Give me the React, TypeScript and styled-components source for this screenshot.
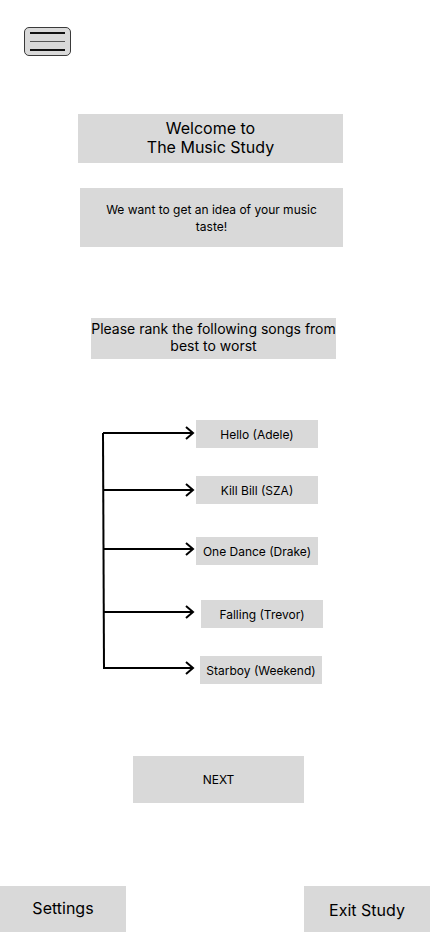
import styled, { createGlobalStyle } from "styled-components";

const songs = [
    { title: "Hello (Adele)", indent: 0, gap: 0 },
    { title: "Kill Bill (SZA)", indent: 0, gap: 28 },
    { title: "One Dance (Drake)", indent: 0, gap: 33 },
    { title: "Falling (Trevor)", indent: 5, gap: 35 },
    { title: "Starboy (Weekend)", indent: 4, gap: 28 },
];

// arrow rows, in svg coords (svg sits at x=100, y=420)
const arrowRows = [13, 70, 129, 192, 248];

export default function App() {
    return (
        <>
            <GlobalStyle />
            <Page>
                <MenuButton aria-label="menu">
                    <MenuLine />
                    <MenuLine $muted />
                    <MenuLine />
                </MenuButton>

                <TitleBox>
                    Welcome to
                    <br />
                    The Music Study
                </TitleBox>

                <IntroBox>
                    <IntroText>We want to get an idea of your music taste!</IntroText>
                </IntroBox>

                <PromptBox>
                    Please rank the following songs from
                    <br />
                    best to worst
                </PromptBox>

                <RankArea>
                    <Bracket width="96" height="263" viewBox="0 0 96 263">
                        <path
                            d="M3 13 L4 248"
                            stroke="#000"
                            strokeWidth="2"
                            fill="none"
                        />
                        {arrowRows.map((y, i) => (
                            <g key={i} stroke="#000" strokeWidth="2" fill="none">
                                <line x1="3" y1={y} x2="93" y2={y} />
                                <polyline
                                    points={`86,${y - 6} 93,${y} 86,${y + 6}`}
                                    strokeLinejoin="miter"
                                />
                            </g>
                        ))}
                    </Bracket>
                    <SongColumn>
                        {songs.map((s) => (
                            <SongBox key={s.title} $indent={s.indent} $gap={s.gap}>
                                {s.title}
                            </SongBox>
                        ))}
                    </SongColumn>
                </RankArea>

                <NextButton>NEXT</NextButton>

                <BottomBar>
                    <BottomButton>Settings</BottomButton>
                    <BottomButton $drop>Exit Study</BottomButton>
                </BottomBar>
            </Page>
        </>
    );
}

// ! Styles

const GlobalStyle = createGlobalStyle`
    html, body {
        margin: 0;
        padding: 0;
        background: #ffffff;
    }
    body {
        font-family: Inter, "Noto Sans", sans-serif;
        color: #000;
    }
    * {
        box-sizing: border-box;
    }
`;

const Page = styled.div`
    width: 430px;
    height: 932px;
    display: flex;
    flex-direction: column;
    align-items: flex-start;
    overflow: hidden;
`;

const MenuButton = styled.div`
    margin: 27px 0 0 24px;
    width: 47px;
    height: 29px;
    border: 1.5px solid #3a3a3a;
    border-radius: 5px;
    background: #d9d9d9;
    display: flex;
    flex-direction: column;
    justify-content: center;
    gap: 7px;
    padding: 0 5px;
`;

const MenuLine = styled.span<{ $muted?: boolean }>`
    display: block;
    height: 1.5px;
    background: ${(p) => (p.$muted ? "#555" : "#111")};
`;

const GreyBox = styled.div`
    background: #d9d9d9;
    display: flex;
    align-items: center;
    justify-content: center;
    text-align: center;
`;

const TitleBox = styled(GreyBox)`
    margin: 58px 0 0 78px;
    width: 265px;
    height: 49px;
    padding-bottom: 2px;
    font-size: 16px;
    line-height: 19px;
`;

const IntroBox = styled(GreyBox)`
    margin: 25px 0 0 80px;
    width: 263px;
    height: 59px;
`;

const IntroText = styled.p`
    margin: 0;
    width: 225px;
    font-size: 12px;
    line-height: 17px;
`;

const PromptBox = styled(GreyBox)`
    margin: 71px 0 0 91px;
    width: 245px;
    height: 41px;
    padding-bottom: 4px;
    font-size: 14px;
    line-height: 17px;
    white-space: nowrap;
`;

const RankArea = styled.div`
    margin: 61px 0 0 100px;
    display: flex;
    align-items: flex-start;
`;

const Bracket = styled.svg`
    display: block;
    flex-shrink: 0;
`;

const SongColumn = styled.div`
    display: flex;
    flex-direction: column;
`;

const SongBox = styled(GreyBox)<{ $indent: number; $gap: number }>`
    margin-top: ${(p) => p.$gap}px;
    margin-left: ${(p) => p.$indent}px;
    width: 122px;
    height: 28px;
    font-size: 12px;
`;

const NextButton = styled(GreyBox)`
    margin: 72px 0 0 133px;
    width: 171px;
    height: 47px;
    font-size: 12px;
`;

const BottomBar = styled.div`
    margin-top: auto;
    width: 100%;
    display: flex;
    justify-content: space-between;
    align-items: flex-end;
`;

const BottomButton = styled(GreyBox)<{ $drop?: boolean }>`
    width: 126px;
    height: 46px;
    font-size: 16px;
    padding-top: ${(p) => (p.$drop ? "2px" : "0")};
    padding-bottom: ${(p) => (p.$drop ? "0" : "2px")};
`;
